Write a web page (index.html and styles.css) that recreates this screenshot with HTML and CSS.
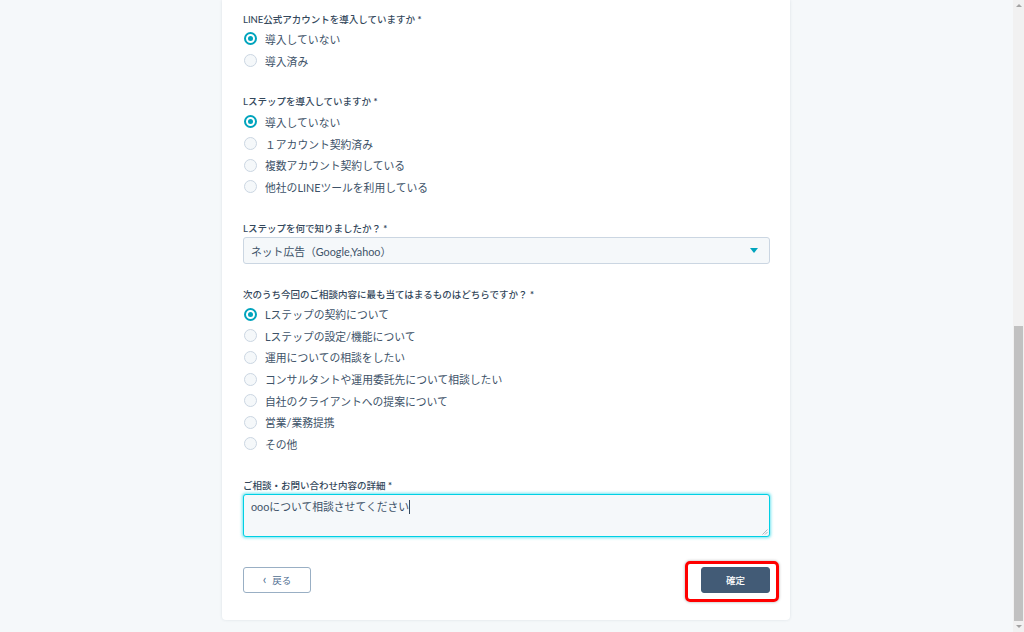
FILE: index.html
```html
<!DOCTYPE html>
<html lang="ja">
<head>
<meta charset="utf-8">
<title>フォーム</title>
<link rel="stylesheet" href="styles.css">
</head>
<body>
<div class="viewport">
  <main class="main">
    <form class="card">
      <div class="field">
        <div class="label">LINE公式アカウントを導入していますか <span class="req">*</span></div>
        <div class="options">
          <div class="opt"><span class="radio on"></span><span>導入していない</span></div>
          <div class="opt"><span class="radio"></span><span>導入済み</span></div>
        </div>
      </div>
      <div class="field">
        <div class="label">Lステップを導入していますか <span class="req">*</span></div>
        <div class="options">
          <div class="opt"><span class="radio on"></span><span>導入していない</span></div>
          <div class="opt"><span class="radio"></span><span>１アカウント契約済み</span></div>
          <div class="opt"><span class="radio"></span><span>複数アカウント契約している</span></div>
          <div class="opt"><span class="radio"></span><span>他社のLINEツールを利用している</span></div>
        </div>
      </div>
      <div class="field field-select">
        <div class="label">Lステップを何で知りましたか？ <span class="req">*</span></div>
        <div class="select">
          <span>ネット広告（Google,Yahoo）</span>
          <span class="caret-down"></span>
        </div>
      </div>
      <div class="field">
        <div class="label">次のうち今回のご相談内容に最も当てはまるものはどちらですか？ <span class="req">*</span></div>
        <div class="options">
          <div class="opt"><span class="radio on"></span><span>Lステップの契約について</span></div>
          <div class="opt"><span class="radio"></span><span>Lステップの設定/機能について</span></div>
          <div class="opt"><span class="radio"></span><span>運用についての相談をしたい</span></div>
          <div class="opt"><span class="radio"></span><span>コンサルタントや運用委託先について相談したい</span></div>
          <div class="opt"><span class="radio"></span><span>自社のクライアントへの提案について</span></div>
          <div class="opt"><span class="radio"></span><span>営業/業務提携</span></div>
          <div class="opt"><span class="radio"></span><span>その他</span></div>
        </div>
      </div>
      <div class="field field-last">
        <div class="label">ご相談・お問い合わせ内容の詳細 <span class="req">*</span></div>
        <div class="textarea">
          <span>oooについて相談させてください</span><span class="cursor"></span>
          <svg class="grip" width="7" height="7" viewBox="0 0 7 7"><path d="M6.5 1.5L1.5 6.5M6.5 4L4 6.5" stroke="#9aa5b1" stroke-width="0.8" fill="none"/></svg>
        </div>
      </div>
      <div class="actions">
        <button type="button" class="btn-back"><span class="chev">‹</span>戻る</button>
        <button type="button" class="btn-submit">確定</button>
      </div>
    </form>
  </main>
  <div class="scrollbar">
    <div class="sb-arrow sb-up"></div>
    <div class="sb-track"><div class="sb-thumb"></div></div>
    <div class="sb-arrow sb-down"></div>
  </div>
</div>
</body>
</html>
```
FILE: styles.css
```css
html, body {
  margin: 0;
  padding: 0;
}
body {
  background: #f5f8fa;
  font-family: "Lato", "Noto Sans CJK JP", sans-serif;
  color: #33475b;
}
.viewport {
  display: flex;
  width: 1024px;
  height: 632px;
  overflow: hidden;
}
.main {
  flex: 1;
  display: flex;
  justify-content: center;
  align-items: flex-start;
  padding-right: 1px;
}
.card {
  width: 527px;
  padding: 11px 20px 27px 21px;
  background: #fff;
  border-radius: 0 0 4px 4px;
  box-shadow: 0 0 3px rgba(45, 62, 80, 0.12);
}
.field {
  margin-bottom: 22.6px;
}
.field-select {
  margin-bottom: 22px;
}
.field-last {
  margin-bottom: 30px;
}
.label {
  height: 14px;
  line-height: 14px;
  padding-top: 1.5px;
  margin-bottom: 1.7px;
  font-size: 9.5px;
  font-weight: 500;
  color: #33475b;
  white-space: nowrap;
}
.req {
  font-weight: 700;
}
.options {
  display: flex;
  flex-direction: column;
}
.opt {
  display: flex;
  align-items: center;
  height: 21.6px;
  font-size: 10.8px;
  color: #3d5268;
  white-space: nowrap;
}
.radio {
  box-sizing: border-box;
  width: 13px;
  height: 13px;
  margin-left: 1px;
  margin-right: 8px;
  border-radius: 50%;
  border: 1px solid #cbd6e2;
  background: #f5f8fa;
  flex: none;
  display: flex;
  align-items: center;
  justify-content: center;
}
.radio.on {
  border: 2px solid #00a4bd;
  background: #fff;
}
.radio.on::after {
  content: "";
  width: 5px;
  height: 5px;
  border-radius: 50%;
  background: #00a4bd;
}
.select {
  box-sizing: border-box;
  height: 27px;
  border: 1px solid #cbd6e2;
  border-radius: 3px;
  background: #f5f8fa;
  display: flex;
  align-items: center;
  justify-content: space-between;
  padding: 0 11px 0 7px;
  font-size: 10.8px;
  color: #3d5268;
}
.caret-down {
  width: 0;
  height: 0;
  border-left: 4px solid transparent;
  border-right: 4px solid transparent;
  border-top: 5px solid #00a4bd;
}
.textarea {
  position: relative;
  box-sizing: border-box;
  height: 43px;
  border: 1px solid #00d0e4;
  border-radius: 3px;
  background: #f5f8fa;
  box-shadow: 0 0 3px 1px rgba(0, 208, 228, 0.55);
  padding: 4px 7px;
  font-size: 10.8px;
  line-height: 16px;
  color: #3d5268;
  display: flex;
  align-items: flex-start;
}
.cursor {
  display: inline-block;
  width: 1px;
  height: 14px;
  margin-top: 1px;
  background: #33475b;
}
.grip {
  position: absolute;
  right: 1px;
  bottom: 1px;
}
.actions {
  display: flex;
  justify-content: space-between;
  align-items: center;
}
.btn-back, .btn-submit {
  box-sizing: border-box;
  height: 26px;
  border-radius: 3px;
  font-family: "Lato", "Noto Sans CJK JP", sans-serif;
  font-size: 9.5px;
  padding: 0;
  cursor: pointer;
  display: flex;
  align-items: center;
  justify-content: center;
}
.btn-back {
  width: 68px;
  background: #fff;
  border: 1px solid #99afc4;
  color: #506e91;
}
.chev {
  font-size: 13px;
  line-height: 1;
  margin-right: 6px;
  margin-top: -2px;
}
.btn-submit {
  position: relative;
  width: 69px;
  background: #425b76;
  border: 1px solid #425b76;
  color: #fff;
  font-weight: 500;
}
.btn-submit::after {
  content: "";
  position: absolute;
  top: -7px;
  left: -17px;
  right: -10px;
  bottom: -10px;
  border: 3px solid #ff0000;
  border-radius: 5px;
  box-shadow: 0 0 3px rgba(0, 0, 0, 0.35);
}
.scrollbar {
  width: 11px;
  flex: none;
  background: #f1f1f1;
  display: flex;
  flex-direction: column;
}
.sb-arrow {
  height: 11px;
  display: flex;
  align-items: center;
  justify-content: center;
}
.sb-up::after {
  content: "";
  border-left: 3px solid transparent;
  border-right: 3px solid transparent;
  border-bottom: 3px solid #a3a3a3;
}
.sb-down::after {
  content: "";
  border-left: 3px solid transparent;
  border-right: 3px solid transparent;
  border-top: 3px solid #a3a3a3;
}
.sb-track {
  flex: 1;
  display: flex;
  flex-direction: column;
  justify-content: flex-end;
  padding: 0 1px;
}
.sb-thumb {
  height: 295px;
  background: #c1c1c1;
}
```
